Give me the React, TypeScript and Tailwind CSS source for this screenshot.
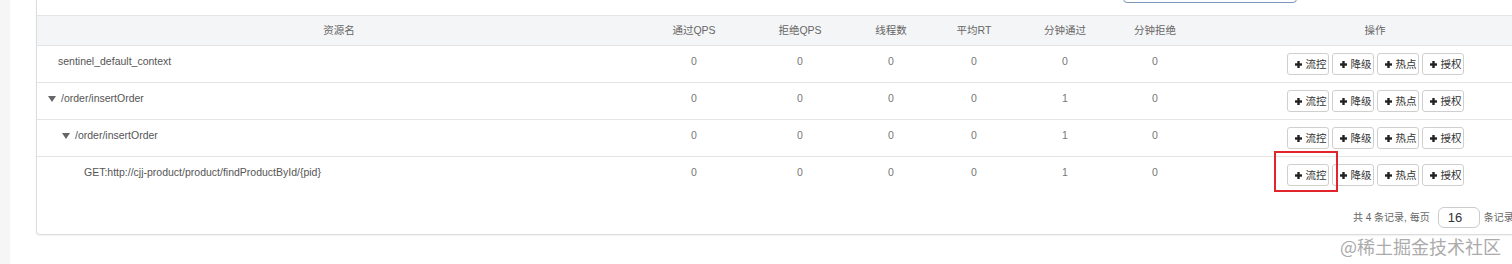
import React from "react";

const FONT = { fontFamily: '"Liberation Sans", Arial, "Noto Sans CJK SC", sans-serif' };

type Row = {
  name: string;
  level: number;
  toggle: boolean;
  vals: string[];
};

const rows: Row[] = [
  { name: "sentinel_default_context", level: -1, toggle: false, vals: ["0", "0", "0", "0", "0", "0"] },
  { name: "/order/insertOrder", level: 0, toggle: true, vals: ["0", "0", "0", "0", "1", "0"] },
  { name: "/order/insertOrder", level: 1, toggle: true, vals: ["0", "0", "0", "0", "1", "0"] },
  { name: "GET:http://cjj-product/product/findProductById/{pid}", level: 2, toggle: false, vals: ["0", "0", "0", "0", "1", "0"] },
];

const GRID = "grid grid-cols-[604px_106px_106px_76px_90px_92px_88px_352px]";

function Plus() {
  return (
    <svg width="7" height="7" viewBox="0 0 7 7" className="shrink-0">
      <rect x="2.3" y="0" width="2.4" height="7" fill="#222" />
      <rect x="0" y="2.3" width="7" height="2.4" fill="#222" />
    </svg>
  );
}

function Btn({ label }: { label: string }) {
  return (
    <div className="h-[22px] w-[42px] flex items-center gap-[4px] pl-[7px] border border-[#cfcfcf] rounded-[3px] bg-white text-[10.5px] text-[#333] leading-none">
      <Plus />
      <span>{label}</span>
    </div>
  );
}

function Tri() {
  return (
    <svg width="8" height="6" viewBox="0 0 8 6" className="shrink-0">
      <path d="M0 0 L8 0 L4 6 Z" fill="#666" />
    </svg>
  );
}

const padMap: Record<number, string> = {
  [-1]: "pl-[21px]",
  0: "pl-[11px]",
  1: "pl-[25px]",
  2: "pl-[47px]",
};

export default function App() {
  return (
    <div className="relative w-[1512px] h-[264px] overflow-hidden bg-white flex" style={FONT}>
      <div className="w-[10px] h-full bg-[#f6f6f6] shrink-0" />
      <div className="pl-[26px] shrink-0">
        <div className="w-[1515px] h-[235px] border-l border-b border-[#dcdcdc] rounded-bl-[4px] shadow-[0_1px_2px_rgba(0,0,0,0.06)] bg-white flex flex-col">
          {/* top search area */}
          <div className="h-[15px] overflow-hidden flex">
            <div className="ml-[1086px] -mt-[28px] h-[31px] w-[174px] border border-[#7b98b8] rounded-[4px] bg-white" />
          </div>
          {/* header */}
          <div className={`${GRID} h-[31px] bg-[#f4f5f7] border-t border-b border-[#e4e4e4] text-[10.5px] text-[#666] items-center text-center`}>
            <div>资源名</div>
            <div>通过QPS</div>
            <div>拒绝QPS</div>
            <div>线程数</div>
            <div>平均RT</div>
            <div>分钟通过</div>
            <div>分钟拒绝</div>
            <div>操作</div>
          </div>
          {rows.map((r, i) => (
            <div
              key={i}
              className={`${GRID} h-[37px] ${i < rows.length - 1 ? "border-b border-[#e4e4e4]" : ""} text-[10.5px] leading-[17px]`}
            >
              <div className={`pt-[7px] flex items-center gap-[5px] h-[24px] text-[#555] ${padMap[r.level]}`}>
                {r.toggle && <Tri />}
                <span>{r.name}</span>
              </div>
              {r.vals.map((v, j) => (
                <div key={j} className="pt-[7px] text-center text-[#777]">
                  {v}
                </div>
              ))}
              <div className="pt-[7px] flex justify-center gap-[3px]">
                <Btn label="流控" />
                <Btn label="降级" />
                <Btn label="热点" />
                <Btn label="授权" />
              </div>
            </div>
          ))}
          {/* pagination */}
          <div className="flex items-center pl-[1316px] mt-[13px] text-[10px] text-[#666] whitespace-nowrap">
            <span>共 4 条记录, 每页</span>
            <div className="ml-[8px] h-[21px] w-[42px] border border-[#cccccc] rounded-[6px] flex items-center pl-[9px] text-[13px] text-[#333]">
              16
            </div>
            <span className="ml-[4px]">条记录</span>
          </div>
        </div>
      </div>

      {/* annotation red box */}
      <div className="absolute left-[1274px] top-[151px] w-[64px] h-[41px] border-2 border-[#e0262b]" />

      {/* watermark */}
      <div
        className="absolute left-[1340px] top-[233px] text-[18px] leading-[26px] text-[#ababab] whitespace-nowrap"
        style={{ fontFamily: '"Noto Sans CJK SC", sans-serif', textShadow: "0 0 1px #fff" }}
      >
        @稀土掘金技术社区
      </div>
    </div>
  );
}
